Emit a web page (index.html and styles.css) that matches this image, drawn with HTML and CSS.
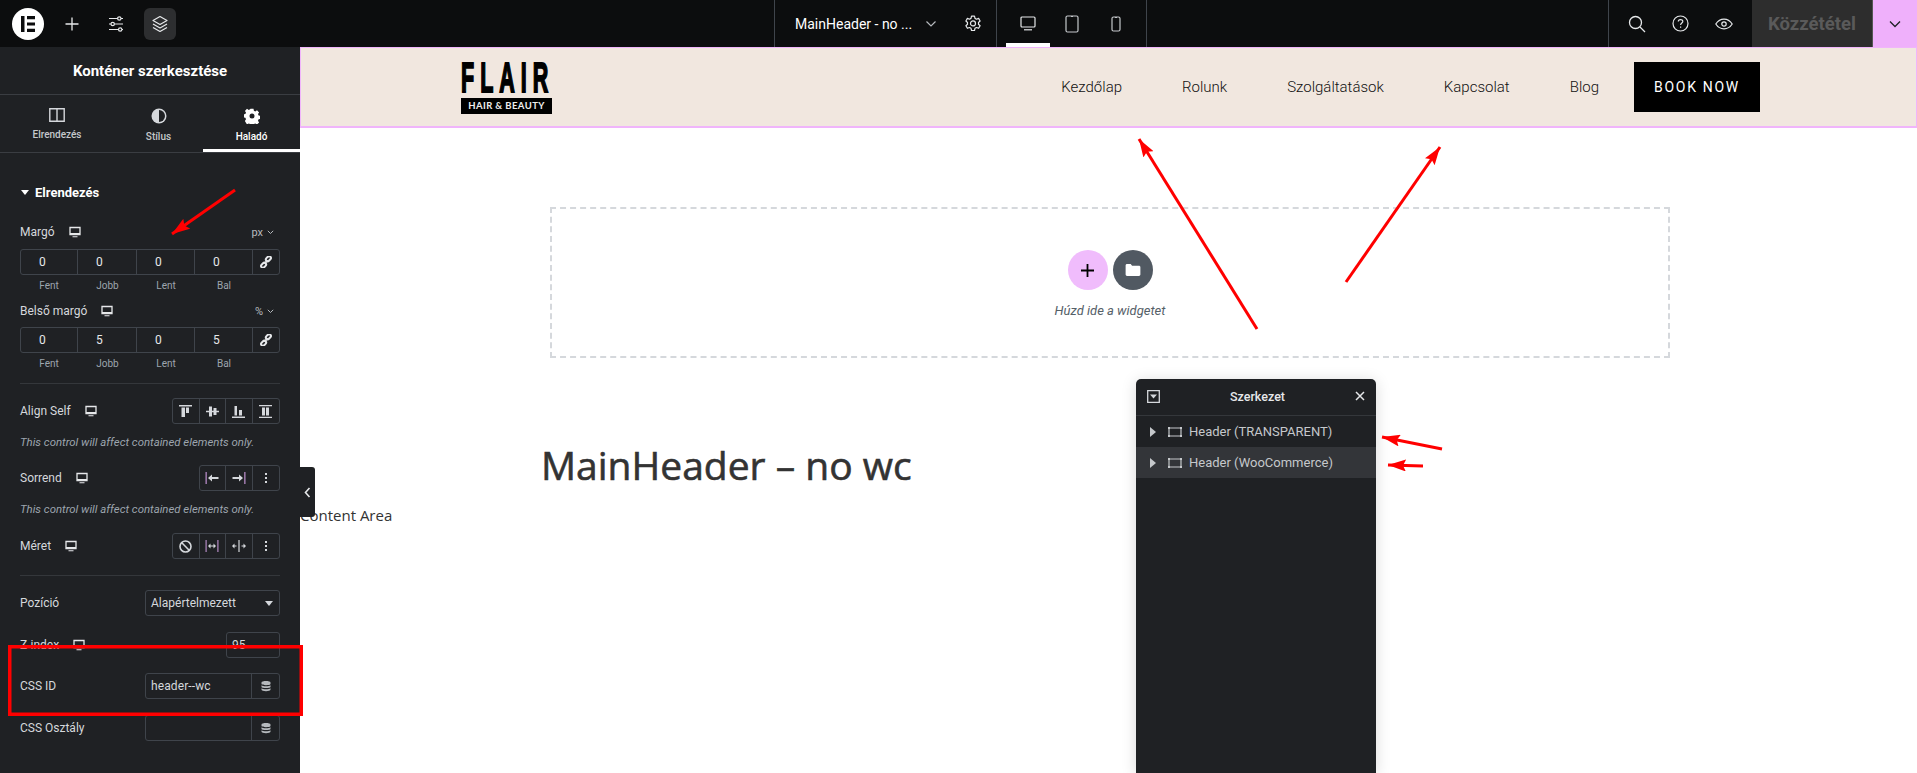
FILE: index.html
```html
<!DOCTYPE html>
<html lang="hu">

<head>
    <meta charset="UTF-8">
    <title>Elementor - MainHeader</title>
    <link rel="stylesheet" href="styles.css">
</head>

<body>

    <svg class="defs" width="0" height="0">
        <symbol id="monitor" viewBox="0 0 12 12">
            <path d="M1 1.500h10v7H1z" fill="none" stroke="currentColor" stroke-width="1.300" />
            <path d="M1 7h10v1.800H1zM3.500 10.200h5v1h-5z" fill="currentColor" />
        </symbol>
        <symbol id="link" viewBox="0 0 12 12">
            <g fill="none" stroke="currentColor" stroke-width="2">
                <rect x="5.600" y="0.900" width="5.600" height="3.600" rx="1.800" transform="rotate(-45 8.400 2.700)" />
                <rect x="0.800" y="7.500" width="5.600" height="3.600" rx="1.800" transform="rotate(-45 3.600 9.300)" />
                <path d="M4.400 7.600l3.200-3.200" />
            </g>
        </symbol>
        <symbol id="db" viewBox="0 0 12 12">
            <path d="M1.500 2.500C1.500 .5 10.500 .5 10.500 2.500V4C10.500 5.600 1.500 5.600 1.500 4zM1.500 5.300C3 6.600 9 6.600 10.500 5.300V7C10.500 8.400 1.500 8.400 1.500 7zM1.500 8.200C3 9.500 9 9.500 10.500 8.200V9.700C10.500 11.600 1.500 11.600 1.500 9.700z" fill="currentColor" />
        </symbol>
        <symbol id="dots" viewBox="0 0 12 12">
            <path d="M5 1h2v2H5zM5 5h2v2H5zM5 9h2v2H5z" fill="currentColor" />
        </symbol>
        <symbol id="container" viewBox="0 0 14 10">
            <path d="M1 1h12v8H1z" fill="none" stroke="currentColor" stroke-width="1.200" />
            <path d="M0 0h2v2H0zM12 0h2v2h-2zM0 8h2v2H0zM12 8h2v2h-2z" fill="currentColor" />
        </symbol>
        <symbol id="tri" viewBox="0 0 6 10">
            <path d="M0 0l6 5-6 5z" fill="currentColor" />
        </symbol>
    </svg>

    <header class="topbar">
        <div class="top-left">
            <div class="logo-e">
                <svg width="18" height="18" viewBox="0 0 18 18">
                    <path d="M2 1h3.500v16H2zM8 1h8v3.200H8zM8 7.400h8v3.200H8zM8 13.800h8V17H8z" fill="#0c0d0e" />
                </svg>
            </div>
            <button class="top-icon icon-plus">
                <svg width="16" height="16" viewBox="0 0 16 16">
                    <path d="M8 1.500v13M1.500 8h13" stroke="currentColor" stroke-width="1.300" />
                </svg>
            </button>
            <button class="top-icon icon-sliders">
                <svg width="18" height="18" viewBox="0 0 18 18" fill="none" stroke="currentColor" stroke-width="1.200">
                    <path d="M2 3.500h8.500M14 3.500h2M2 9h2M7.500 9H16M2 14.500h9.500M15 14.500h1" />
                    <circle cx="12.300" cy="3.500" r="1.700" />
                    <circle cx="5.700" cy="9" r="1.700" />
                    <circle cx="13.200" cy="14.500" r="1.700" />
                </svg>
            </button>
            <button class="top-icon icon-layers">
                <svg width="18" height="18" viewBox="0 0 18 18" fill="none" stroke="currentColor" stroke-width="1.200" stroke-linejoin="round">
                    <path d="M9 1.500l7 4-7 4-7-4z" />
                    <path d="M2 9l7 4 7-4M2 12.500l7 4 7-4" />
                </svg>
            </button>
        </div>
        <div class="top-doc">
            <span class="doc-title">MainHeader - no ...</span>
            <svg class="doc-chevron" width="12" height="8" viewBox="0 0 12 8">
                <path d="M1.500 1.500L6 6l4.500-4.500" fill="none" stroke="#b5b9bd" stroke-width="1.200" />
            </svg>
            <svg class="doc-gear" width="18" height="18" viewBox="0 0 18 18" fill="none" stroke="#e6e8ea" stroke-width="1.200" stroke-linejoin="round">
                <path d="M7.500 1.200h3l.5 2.200 1.500.8 2.100-.8 1.500 2.600-1.600 1.500v1.700l1.600 1.500-1.500 2.600-2.100-.8-1.500.8-.5 2.200h-3L7 13.300l-1.500-.8-2.100.8-1.500-2.600L3.500 9.200V7.500L1.900 6l1.500-2.600 2.100.8L7 3.400z" />
                <circle cx="9" cy="8.400" r="2.500" />
            </svg>
        </div>
        <div class="top-devices">
            <div class="device active">
                <svg width="16" height="15" viewBox="0 0 16 15" fill="none" stroke="currentColor" stroke-width="1.200">
                    <rect x="1" y="1" width="14" height="10" rx="1" />
                    <path d="M4 13.800h8" />
                </svg>
            </div>
            <div class="device">
                <svg width="14" height="18" viewBox="0 0 14 18" fill="none" stroke="currentColor" stroke-width="1.200">
                    <rect x="1" y="1" width="12" height="16" rx="1.500" />
                    <path d="M6 1.500h2" />
                </svg>
            </div>
            <div class="device">
                <svg width="10" height="16" viewBox="0 0 10 16" fill="none" stroke="currentColor" stroke-width="1.200">
                    <rect x="1" y="1" width="8" height="14" rx="1.500" />
                    <path d="M4 1.500h2" />
                </svg>
            </div>
        </div>
        <div class="top-spacer"></div>
        <div class="top-right">
            <svg width="18" height="18" viewBox="0 0 18 18" fill="none" stroke="#e6e8ea" stroke-width="1.300">
                <circle cx="7.500" cy="7.500" r="6" />
                <path d="M12 12l5 5" />
            </svg>
            <svg width="17" height="17" viewBox="0 0 17 17" fill="none" stroke="#e6e8ea" stroke-width="1.200">
                <circle cx="8.500" cy="8.500" r="7.500" />
                <path d="M6.300 6.600C6.300 3.900 10.800 3.900 10.800 6.500 10.800 8 8.600 8.200 8.600 10" />
                <path d="M8.600 11.500v1.300" />
            </svg>
            <svg width="18" height="12" viewBox="0 0 18 12" fill="none" stroke="#e6e8ea" stroke-width="1.200">
                <path d="M.8 6C5 -.5 13 -.5 17.200 6 13 12.500 5 12.500 .8 6z" />
                <circle cx="9" cy="6" r="2.200" />
            </svg>
        </div>
        <div class="publish">Közzététel</div>
        <div class="publish-more">
            <svg width="12" height="8" viewBox="0 0 12 8">
                <path d="M1 1.500L6 6.500l5-5" fill="none" stroke="#1f2124" stroke-width="1.300" />
            </svg>
        </div>
    </header>

    <div class="workspace">
        <aside class="sidebar">
            <div class="panel-title">Konténer szerkesztése</div>
            <div class="tabs">
                <div class="tab tab-layout">
                    <svg width="16" height="14" viewBox="0 0 16 14">
                        <path d="M.8.800h14.400v12.400H.8z" fill="none" stroke="#d5d8dc" stroke-width="1.400" />
                        <path d="M8 1v12" stroke="#d5d8dc" stroke-width="1.400" />
                    </svg>
                    <span>Elrendezés</span>
                </div>
                <div class="tab tab-style">
                    <svg width="16" height="16" viewBox="0 0 16 16">
                        <circle cx="8" cy="8" r="7.500" fill="#d5d8dc" />
                        <path d="M8 2a6 6 0 0 1 0 12z" fill="#1f2124" />
                    </svg>
                    <span>Stílus</span>
                </div>
                <div class="tab tab-advanced active">
                    <svg width="16" height="16" viewBox="0 0 16 16">
                        <path d="M6.500.8h3l.4 2 1.400.6 1.700-1.100 2.100 2.100-1.100 1.700.6 1.400 2 .4v3l-2 .4-.6 1.400 1.100 1.700-2.100 2.100-1.700-1.100-1.400.6-.4 2h-3l-.4-2-1.400-.6-1.700 1.100L.9 12.900 2 11.200 1.400 9.800l-2-.4v-3l2-.4L2 4.600.9 2.900 3 .8l1.700 1.100 1.400-.6zM8 5.500a2.500 2.500 0 1 0 0 5 2.500 2.500 0 0 0 0-5z" fill="#fff" fill-rule="evenodd" />
                    </svg>
                    <span>Haladó</span>
                </div>
            </div>

            <div class="controls">
                <div class="section-title"><i class="caret"></i>Elrendezés</div>

                <div class="row row-margin">
                    <span class="label">Margó<svg class="mon"><use href="#monitor" /></svg></span>
                    <span class="unit">px<svg width="7" height="5" viewBox="0 0 7 5"><path d="M.8.800L3.500 3.500 6.200.8" fill="none" stroke="currentColor" /></svg></span>
                </div>
                <div class="dims">
                    <span>0</span><span>0</span><span>0</span><span>0</span>
                    <button class="dim-link"><svg width="12" height="12"><use href="#link" /></svg></button>
                </div>
                <div class="dim-labels"><span>Fent</span><span>Jobb</span><span>Lent</span><span>Bal</span></div>

                <div class="row row-padding">
                    <span class="label">Belső margó<svg class="mon"><use href="#monitor" /></svg></span>
                    <span class="unit">%<svg width="7" height="5" viewBox="0 0 7 5"><path d="M.8.800L3.500 3.500 6.200.8" fill="none" stroke="currentColor" /></svg></span>
                </div>
                <div class="dims dims-padding">
                    <span>0</span><span>5</span><span>0</span><span>5</span>
                    <button class="dim-link"><svg width="12" height="12"><use href="#link" /></svg></button>
                </div>
                <div class="dim-labels"><span>Fent</span><span>Jobb</span><span>Lent</span><span>Bal</span></div>

                <hr class="sep sep-first">

                <div class="row ctl-row row-align">
                    <span class="label">Align Self<svg class="mon"><use href="#monitor" /></svg></span>
                    <div class="group">
                        <button>
                            <svg width="13" height="13" viewBox="0 0 13 13"><path d="M0 0h13v1.500H0zM2.500 2.500h3.500V12H2.500zM7 2.500h3V8H7z" fill="#d5d8dc" /></svg>
                        </button>
                        <button>
                            <svg width="13" height="13" viewBox="0 0 13 13"><path d="M0 5.800h13v1.400H0zM3 1.500h3v10H3zM7.500 3h3v7h-3z" fill="#d5d8dc" /></svg>
                        </button>
                        <button>
                            <svg width="13" height="13" viewBox="0 0 13 13"><path d="M0 11.500h13V13H0zM2.500 1h2.500v9.500H2.500zM7 5h3v5.500H7z" fill="#d5d8dc" /></svg>
                        </button>
                        <button>
                            <svg width="13" height="13" viewBox="0 0 13 13"><path d="M0 0h13v1.300H0zM0 11.700h13V13H0zM3 2.500h3v8H3zM7 2.500h3v8H7z" fill="#d5d8dc" /></svg>
                        </button>
                    </div>
                </div>
                <div class="note">This control will affect contained elements only.</div>

                <div class="row ctl-row row-order">
                    <span class="label">Sorrend<svg class="mon"><use href="#monitor" /></svg></span>
                    <div class="group">
                        <button>
                            <svg width="14" height="12" viewBox="0 0 14 12"><path d="M.5 0h1.300v12H.5z" fill="#b48ac4" /><path d="M3 6l4-3.500V5h6.500v2H7v2.500z" fill="#d5d8dc" /></svg>
                        </button>
                        <button>
                            <svg width="14" height="12" viewBox="0 0 14 12"><path d="M12.200 0h1.300v12h-1.300z" fill="#b48ac4" /><path d="M11 6L7 2.500V5H.5v2H7v2.500z" fill="#d5d8dc" /></svg>
                        </button>
                        <button><svg width="12" height="12"><use href="#dots" /></svg></button>
                    </div>
                </div>
                <div class="note">This control will affect contained elements only.</div>

                <div class="row ctl-row row-size">
                    <span class="label">Méret<svg class="mon"><use href="#monitor" /></svg></span>
                    <div class="group">
                        <button>
                            <svg width="13" height="13" viewBox="0 0 13 13" fill="none" stroke="#d5d8dc" stroke-width="1.600"><circle cx="6.500" cy="6.500" r="5.500" /><path d="M2.800 2.800l7.400 7.400" /></svg>
                        </button>
                        <button>
                            <svg width="14" height="12" viewBox="0 0 14 12"><path d="M.5 0h1.200v12H.5z" fill="#b48ac4" /><path d="M12.300 0h1.200v12h-1.200z" fill="#b48ac4" /><path d="M3 6l2.500-2.500v2h3v-2L11 6 8.500 8.500v-2h-3v2z" fill="#d5d8dc" /></svg>
                        </button>
                        <button>
                            <svg width="14" height="12" viewBox="0 0 14 12"><path d="M6.400 0h1.200v12H6.400z" fill="#d5d8dc" /><path d="M0 6l2.500-2.500v2h2v1h-2v2zM14 6l-2.500-2.500v2h-2v1h2v2z" fill="#d5d8dc" /></svg>
                        </button>
                        <button><svg width="12" height="12"><use href="#dots" /></svg></button>
                    </div>
                </div>

                <hr class="sep sep-second">

                <div class="row ctl-row row-position">
                    <span class="label">Pozíció</span>
                    <div class="select">Alapértelmezett<i class="caret caret-select"></i></div>
                </div>
                <div class="row ctl-row row-z">
                    <span class="label">Z-index<svg class="mon"><use href="#monitor" /></svg></span>
                    <div class="z-input">95</div>
                </div>
                <div class="row ctl-row row-id">
                    <span class="label">CSS ID</span>
                    <div class="text-input"><span>header--wc</span><button><svg width="12" height="12"><use href="#db" /></svg></button></div>
                </div>
                <div class="row ctl-row row-class">
                    <span class="label">CSS Osztály</span>
                    <div class="text-input"><span></span><button><svg width="12" height="12"><use href="#db" /></svg></button></div>
                </div>
            </div>
        </aside>

        <main class="preview">
            <div class="site-header">
                <div class="brand">
                    <div class="brand-name"><span>FLAIR</span></div>
                    <div class="brand-sub">HAIR &amp; BEAUTY</div>
                </div>
                <nav class="site-nav">
                    <a>Kezdőlap</a>
                    <a>Rolunk</a>
                    <a>Szolgáltatások</a>
                    <a>Kapcsolat</a>
                    <a>Blog</a>
                </nav>
                <a class="book">BOOK NOW</a>
            </div>

            <div class="dropzone">
                <div class="drop-buttons">
                    <span class="drop-btn drop-add">
                        <svg width="13" height="13" viewBox="0 0 13 13"><path d="M6.500 0v13M0 6.500h13" stroke="#000" stroke-width="1.800" /></svg>
                    </span>
                    <span class="drop-btn drop-folder">
                        <svg width="16" height="12" viewBox="0 0 16 13"><path d="M0 1.500C0 .7.700 0 1.500 0h4L7 2h7.500c.8 0 1.500.7 1.500 1.500v8c0 .8-.7 1.500-1.500 1.500h-13C.7 13 0 12.300 0 11.500z" fill="#fff" /></svg>
                    </span>
                </div>
                <div class="drop-text">Húzd ide a widgetet</div>
            </div>

            <h1 class="page-title">MainHeader – no wc</h1>
            <p class="page-content">Content Area</p>
        </main>
    </div>

    <!-- floating things on top of the editor -->
    <div class="collapse-tab">
        <svg width="7" height="11" viewBox="0 0 7 11"><path d="M5.500 1L1.500 5.500l4 4.500" fill="none" stroke="#e6e8ea" stroke-width="1.600" /></svg>
    </div>

    <div class="navigator">
        <div class="nav-head">
            <svg width="13" height="13" viewBox="0 0 13 13"><path d="M.7.700h11.600v11.600H.7z" fill="none" stroke="#d5d8dc" stroke-width="1.300" /><path d="M3 4.500h7L6.500 8.500z" fill="#d5d8dc" /></svg>
            <span>Szerkezet</span>
            <svg width="10" height="10" viewBox="0 0 10 10"><path d="M1 1l8 8M9 1l-8 8" stroke="#e6e8ea" stroke-width="1.500" /></svg>
        </div>
        <div class="nav-item">
            <svg class="nav-tri"><use href="#tri" /></svg>
            <svg class="nav-box"><use href="#container" /></svg>
            <span>Header (TRANSPARENT)</span>
        </div>
        <div class="nav-item hover">
            <svg class="nav-tri"><use href="#tri" /></svg>
            <svg class="nav-box"><use href="#container" /></svg>
            <span>Header (WooCommerce)</span>
        </div>
    </div>

    <svg class="marks" width="1917" height="773" viewBox="0 0 1917 773">
        <defs>
            <marker id="head" markerUnits="userSpaceOnUse" markerWidth="20" markerHeight="12" refX="18" refY="6" orient="auto">
                <path d="M0 0L18 6 0 12 3 6z" fill="#f00" />
            </marker>
        </defs>
        <g stroke="#f00" stroke-width="3" fill="none">
            <path d="M235 190L172 234" marker-end="url(#head)" />
            <path d="M1257 329L1139 139" marker-end="url(#head)" />
            <path d="M1346 282L1440 147" marker-end="url(#head)" />
            <path d="M1442 449L1382 437" marker-end="url(#head)" />
            <path d="M1423 466L1388 465" marker-end="url(#head)" />
            <rect x="9.750" y="646.750" width="291.500" height="67.500" stroke-width="3.500" />
        </g>
    </svg>

</body>

</html>
```

FILE: styles.css
```css
* {
    box-sizing: border-box;
}

html,
body {
    margin: 0;
    height: 773px;
    overflow: hidden;
}

body {
    position: relative;
    font-family: Roboto, "Liberation Sans", sans-serif;
    background: #fff;
}

button {
    font: inherit;
    color: inherit;
    background: none;
    border: none;
    padding: 0;
}

.defs {
    position: absolute;
}

/* top bar */

.topbar {
    display: flex;
    height: 47px;
    background: #0c0d0e;
    color: #e6e8ea;
}

.top-left {
    display: flex;
    align-items: center;
    width: 774px;
    padding-left: 12px;
}

.logo-e {
    display: flex;
    align-items: center;
    justify-content: center;
    width: 32px;
    height: 32px;
    border-radius: 50%;
    background: #fff;
}

.top-icon {
    display: flex;
    align-items: center;
    justify-content: center;
    width: 32px;
    height: 32px;
    border-radius: 6px;
}

.icon-plus {
    margin-left: 12px;
}

.icon-sliders {
    margin-left: 12px;
}

.icon-layers {
    margin-left: 12px;
    background: #2d2e30;
}

.top-doc {
    display: flex;
    align-items: center;
    width: 223px;
    padding-left: 20px;
    border-left: 1px solid #3f444b;
    border-right: 1px solid #3f444b;
}

.doc-title {
    width: 130px;
    font-size: 14px;
    color: #fff;
    white-space: nowrap;
}

.doc-chevron {
    margin-right: 27px;
}

.top-devices {
    display: flex;
    align-items: stretch;
    width: 150px;
    padding-left: 9px;
    border-right: 1px solid #3f444b;
}

.device {
    display: flex;
    align-items: center;
    justify-content: center;
    width: 44px;
    color: #c5c8cb;
}

.device.active {
    color: #e6e8ea;
    border-bottom: 4px solid #fff;
    padding-top: 4px;
}

.top-spacer {
    flex: 1;
}

.top-right {
    display: flex;
    align-items: center;
    justify-content: space-between;
    width: 144px;
    padding: 0 19px;
    border-left: 1px solid #3f444b;
}

.publish {
    display: flex;
    align-items: center;
    justify-content: center;
    width: 120px;
    background: #2d2d2d;
    color: #5a5a5a;
    font-size: 18.500px;
    font-weight: 700;
}

.publish-more {
    display: flex;
    align-items: center;
    justify-content: center;
    width: 45px;
    background: #efb0fb;
    border-left: 1px solid #555;
}

/* editor area */

.workspace {
    display: flex;
    height: 726px;
}

.sidebar {
    flex: none;
    width: 300px;
    background: #1f2124;
    color: #d5d8dc;
}

.panel-title {
    display: flex;
    align-items: center;
    justify-content: center;
    height: 48px;
    border-bottom: 1px solid #3a3d42;
    font-size: 15px;
    font-weight: 700;
    color: #fff;
}

.tabs {
    display: flex;
    height: 58px;
    border-bottom: 1px solid #3a3d42;
}

.tab {
    display: flex;
    flex-direction: column;
    align-items: center;
    padding-top: 13px;
    gap: 7px;
    font-size: 10px;
    font-weight: 500;
    color: #c5c8cb;
}

.tab-layout {
    width: 114px;
}

.tab-style {
    width: 89px;
}

.tab-advanced {
    width: 97px;
}

.tab.active {
    color: #fff;
    border-bottom: 3px solid #fff;
}

.controls {
    padding: 29px 20px 0;
    font-size: 12px;
}

.section-title {
    display: flex;
    align-items: center;
    height: 20px;
    font-size: 13px;
    font-weight: 700;
    color: #fff;
}

.caret {
    width: 0;
    height: 0;
    margin-right: 6px;
    margin-left: 1px;
    border-left: 4px solid transparent;
    border-right: 4px solid transparent;
    border-top: 5px solid #fff;
}

.row {
    display: flex;
    align-items: center;
    justify-content: space-between;
    height: 20px;
}

.row-margin {
    margin-top: 20px;
}

.row-padding {
    margin-top: 8px;
}

.label {
    display: flex;
    align-items: center;
}

.mon {
    width: 12px;
    height: 12px;
    margin-left: 14px;
    color: #e6e8ea;
}

.unit {
    display: flex;
    align-items: center;
    gap: 4px;
    padding-right: 6px;
    font-size: 11px;
    color: #b5b9bd;
}

.dims {
    display: grid;
    grid-template-columns: 57px 59px 58px 58px 1fr;
    height: 26px;
    margin-top: 7px;
    border: 1px solid #3f444b;
    border-radius: 3px;
}

.dims-padding {
    margin-top: 6px;
}

.dims span {
    display: flex;
    align-items: center;
    padding-left: 18px;
    border-right: 1px solid #3f444b;
    font-size: 12px;
    color: #e6e8ea;
}

.dim-link {
    display: flex;
    align-items: center;
    justify-content: center;
    color: #e6e8ea;
}

.dim-labels {
    display: grid;
    grid-template-columns: 58px 59px 58px 58px;
    height: 14px;
    margin-top: 4px;
    font-size: 10px;
    line-height: 14px;
    text-align: center;
    color: #9da5ae;
}

.sep {
    height: 1px;
    margin: 0;
    border: none;
    background: #34373b;
}

.sep-first {
    margin-top: 12px;
}

.sep-second {
    margin-top: 16px;
}

.ctl-row {
    height: 26px;
}

.row-align {
    margin-top: 14px;
}

.row-order {
    margin-top: 15px;
}

.row-size {
    margin-top: 16px;
}

.row-position {
    margin-top: 14px;
}

.row-z {
    margin-top: 16px;
}

.row-id {
    margin-top: 15px;
}

.row-class {
    margin-top: 16px;
}

.group {
    display: flex;
    height: 26px;
    border: 1px solid #3f444b;
    border-radius: 3px;
}

.group button {
    display: flex;
    align-items: center;
    justify-content: center;
    width: 26.500px;
    border-right: 1px solid #3f444b;
    color: #d5d8dc;
}

.group button:last-child {
    border-right: none;
}

.note {
    height: 16px;
    margin-top: 10px;
    font-size: 11.400px;
    font-style: italic;
    line-height: 16px;
    color: #9da5ae;
    white-space: nowrap;
}

.select {
    display: flex;
    align-items: center;
    justify-content: space-between;
    width: 135px;
    height: 26px;
    padding: 0 6px 0 5px;
    border: 1px solid #3f444b;
    border-radius: 3px;
}

.caret-select {
    margin-right: 0;
    border-left-width: 4.500px;
    border-right-width: 4.500px;
    border-top-color: #d5d8dc;
}

.z-input {
    display: flex;
    align-items: center;
    width: 54px;
    height: 26px;
    padding-left: 5px;
    border: 1px solid #3f444b;
    border-radius: 3px;
}

.text-input {
    display: flex;
    width: 135px;
    height: 26px;
    border: 1px solid #3f444b;
    border-radius: 3px;
}

.text-input span {
    display: flex;
    flex: 1;
    align-items: center;
    padding-left: 5px;
    border-right: 1px solid #3f444b;
    font-variant-ligatures: none;
    letter-spacing: .1px;
}

.text-input button {
    display: flex;
    align-items: center;
    justify-content: center;
    width: 27px;
    color: #b5b9bd;
}

/* the page being edited */

.preview {
    flex: 1;
    min-width: 0;
    background: #fff;
}

.site-header {
    display: flex;
    align-items: center;
    height: 81px;
    padding: 0 156px 0 160px;
    background: #f1e7df;
    border: 1px solid #f0b5fb;
    border-bottom-width: 2px;
}

.brand {
    width: 91px;
}

.brand-name {
    height: 33px;
    font-family: "Liberation Sans", sans-serif;
    font-size: 43px;
    font-weight: 700;
    line-height: 33px;
    white-space: nowrap;
    color: #000;
}

/* no condensed face here, so squeeze the bold one */
.brand-name span {
    display: inline-block;
    letter-spacing: 12px;
    transform: scaleX(.5);
    transform-origin: left center;
    -webkit-text-stroke: 2px #000;
}

.brand-sub {
    height: 16px;
    margin-top: 4px;
    background: #000;
    color: #eee;
    font-family: Lato, "Liberation Sans", sans-serif;
    font-size: 9.500px;
    font-weight: 700;
    line-height: 16px;
    letter-spacing: .4px;
    text-align: center;
    white-space: nowrap;
}

.site-nav {
    display: flex;
    gap: 60px;
    margin-left: auto;
    font-size: 15px;
    font-weight: 300;
    color: #111;
}

.book {
    display: flex;
    align-items: center;
    justify-content: center;
    width: 126px;
    height: 50px;
    margin-left: 35px;
    background: #000;
    color: #fff;
    font-size: 14px;
    letter-spacing: 1.700px;
}

.dropzone {
    display: flex;
    flex-direction: column;
    align-items: center;
    width: 1120px;
    height: 151px;
    margin: 79px 0 0 250px;
    padding-top: 41px;
    border: 2px dashed #d5d8dc;
}

.drop-buttons {
    display: flex;
    gap: 5px;
}

.drop-btn {
    display: flex;
    align-items: center;
    justify-content: center;
    width: 40px;
    height: 40px;
    border-radius: 50%;
}

.drop-add {
    background: #f0bcfc;
}

.drop-folder {
    background: #515962;
}

.drop-text {
    margin-top: 13px;
    font-size: 13px;
    font-style: italic;
    color: #556068;
}

/* Open Sans has no medium weight here, thicken the regular a bit */
.page-title {
    margin: 80px 0 0 241px;
    font-family: "Open Sans", sans-serif;
    font-size: 39px;
    font-weight: 400;
    line-height: 54px;
    color: #333;
    -webkit-text-stroke: .6px #333;
}

.page-content {
    margin: 12px 0 0;
    font-family: "Open Sans", sans-serif;
    font-size: 15px;
    line-height: 22px;
    color: #333;
}

/* overlays */

.collapse-tab {
    position: absolute;
    left: 300px;
    top: 467px;
    display: flex;
    align-items: center;
    justify-content: center;
    width: 15px;
    height: 50px;
    background: #1f2124;
    border-radius: 0 3px 3px 0;
}

.navigator {
    position: absolute;
    left: 1136px;
    top: 379px;
    width: 240px;
    height: 394px;
    background: #1f2124;
    border-radius: 5px 5px 0 0;
    box-shadow: 0 2px 15px rgba(0, 0, 0, .15);
    color: #c5c8cb;
}

.nav-head {
    display: flex;
    align-items: center;
    justify-content: space-between;
    height: 37px;
    padding: 0 11px 2px;
    border-bottom: 1px solid #34373b;
    font-size: 12.500px;
    font-weight: 500;
    color: #e6e8ea;
}

.nav-item {
    display: flex;
    align-items: center;
    height: 31px;
    padding-left: 14px;
    font-size: 13px;
}

.nav-item.hover {
    background: #333539;
}

.nav-tri {
    width: 6px;
    height: 10px;
}

.nav-box {
    width: 14px;
    height: 10px;
    margin: 0 7px 0 12px;
}

.marks {
    position: absolute;
    left: 0;
    top: 0;
    pointer-events: none;
}
```
